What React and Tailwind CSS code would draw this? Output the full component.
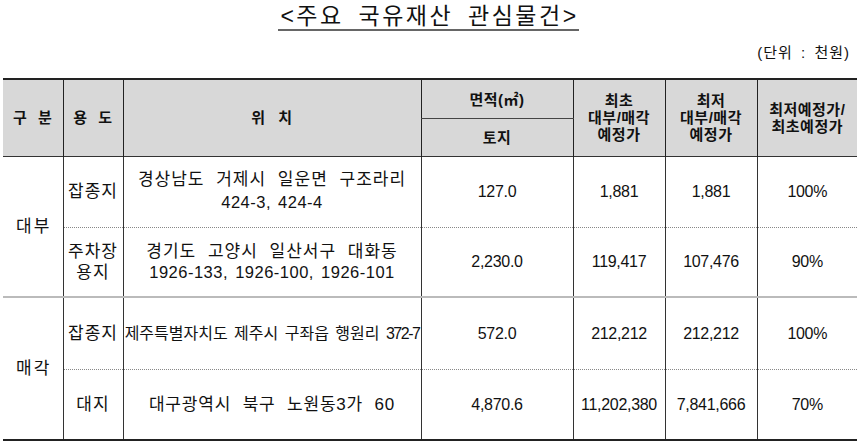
export default function App() {
  const font = { fontFamily: '"Liberation Sans", "Noto Sans CJK KR", sans-serif' };
  const thBase = "bg-[#d8d8d8] text-[#111] font-bold text-[15px] leading-[17px] text-center align-middle tracking-[0.5px]";
  const th = thBase + " border-l border-[#222]";
  const td = "text-[#111] text-[16px] leading-[21px] text-center align-middle border-l border-[#333]";
  const kr = "text-[17px] tracking-[1px] [word-spacing:6px]";
  const addr = "text-[16.5px] tracking-[0.5px] [word-spacing:2px]";
  const num = "tracking-[-0.3px]";
  return (
    <div className="w-[857px] h-[445px] bg-white overflow-hidden text-[#111]" style={font}>
      <div className="pt-[3px] flex justify-center">
        <span className="text-[23px] leading-[26px] border-b-2 border-[#666] tracking-[2.5px] [word-spacing:6px] pl-[2px]">&lt;주요 국유재산 관심물건&gt;</span>
      </div>
      <div className="mt-[12px] pr-[7px] text-right text-[15px] leading-[20px] tracking-[1px] [word-spacing:3px]">(단위 : 천원)</div>
      <table className="mt-[15px] ml-[3px] w-[854px] border-collapse table-fixed">
        <colgroup>
          <col className="w-[60px]" />
          <col className="w-[60px]" />
          <col className="w-[298px]" />
          <col className="w-[152px]" />
          <col className="w-[92px]" />
          <col className="w-[92px]" />
          <col className="w-[100px]" />
        </colgroup>
        <thead>
          <tr className="h-[39px] border-t-2 border-[#222]">
            <th rowSpan={2} className={thBase + " [word-spacing:6px]"}>구 분</th>
            <th rowSpan={2} className={th + " [word-spacing:6px]"}>용 도</th>
            <th rowSpan={2} className={th + " [word-spacing:8px]"}>위 치</th>
            <th className={th + " border-b border-b-[#444] pt-[2px]"}>면적(㎡)</th>
            <th rowSpan={2} className={th}>최초<br />대부/매각<br />예정가</th>
            <th rowSpan={2} className={th}>최저<br />대부/매각<br />예정가</th>
            <th rowSpan={2} className={th + " tracking-[0.2px]"}>최저예정가/<br />최초예정가</th>
          </tr>
          <tr className="h-[38px] border-b border-[#333]">
            <th className={th}>토지</th>
          </tr>
        </thead>
        <tbody>
          <tr className="h-[71px] border-b border-dotted border-[#888]">
            <td rowSpan={2} className="text-[17px] leading-[21px] text-center align-middle tracking-[2px] pl-[2px] border-b-2 border-b-[#bbb]">대부</td>
            <td className={td + " " + kr}>잡종지</td>
            <td className={td + " leading-[22px]"}><span className={kr}>경상남도 거제시 일운면 구조라리</span><br /><span className={addr}>424-3, 424-4</span></td>
            <td className={td}><span className={num}>127.0</span></td>
            <td className={td}><span className={num}>1,881</span></td>
            <td className={td}><span className={num}>1,881</span></td>
            <td className={td}><span className={num}>100%</span></td>
          </tr>
          <tr className="h-[70px] border-b-2 border-[#bbb]">
            <td className={td + " leading-[20px] " + kr}>주차장<br />용지</td>
            <td className={td + " leading-[20px]"}><span className={kr}>경기도 고양시 일산서구 대화동</span><br /><span className={addr}>1926-133, 1926-100, 1926-101</span></td>
            <td className={td}><span className={num}>2,230.0</span></td>
            <td className={td}><span className={num}>119,417</span></td>
            <td className={td}><span className={num}>107,476</span></td>
            <td className={td}><span className={num}>90%</span></td>
          </tr>
          <tr className="h-[72px] border-b border-dotted border-[#888]">
            <td rowSpan={2} className="text-[17px] leading-[21px] text-center align-middle tracking-[2px] pl-[2px] border-b-2 border-b-[#222]">매각</td>
            <td className={td + " " + kr}>잡종지</td>
            <td className={td + " tracking-[0px] [word-spacing:2px] whitespace-nowrap"}>제주특별자치도 제주시 구좌읍 행원리 <span className="tracking-[-1.5px]">372-7</span></td>
            <td className={td}><span className={num}>572.0</span></td>
            <td className={td}><span className={num}>212,212</span></td>
            <td className={td}><span className={num}>212,212</span></td>
            <td className={td}><span className={num}>100%</span></td>
          </tr>
          <tr className="h-[71px] border-b-2 border-[#222]">
            <td className={td + " " + kr}>대지</td>
            <td className={td + " text-[17px] tracking-[0.8px] [word-spacing:6px]"}>대구광역시 북구 노원동3가 60</td>
            <td className={td}><span className={num}>4,870.6</span></td>
            <td className={td}><span className={num}>11,202,380</span></td>
            <td className={td}><span className={num}>7,841,666</span></td>
            <td className={td}><span className={num}>70%</span></td>
          </tr>
        </tbody>
      </table>
    </div>
  );
}
